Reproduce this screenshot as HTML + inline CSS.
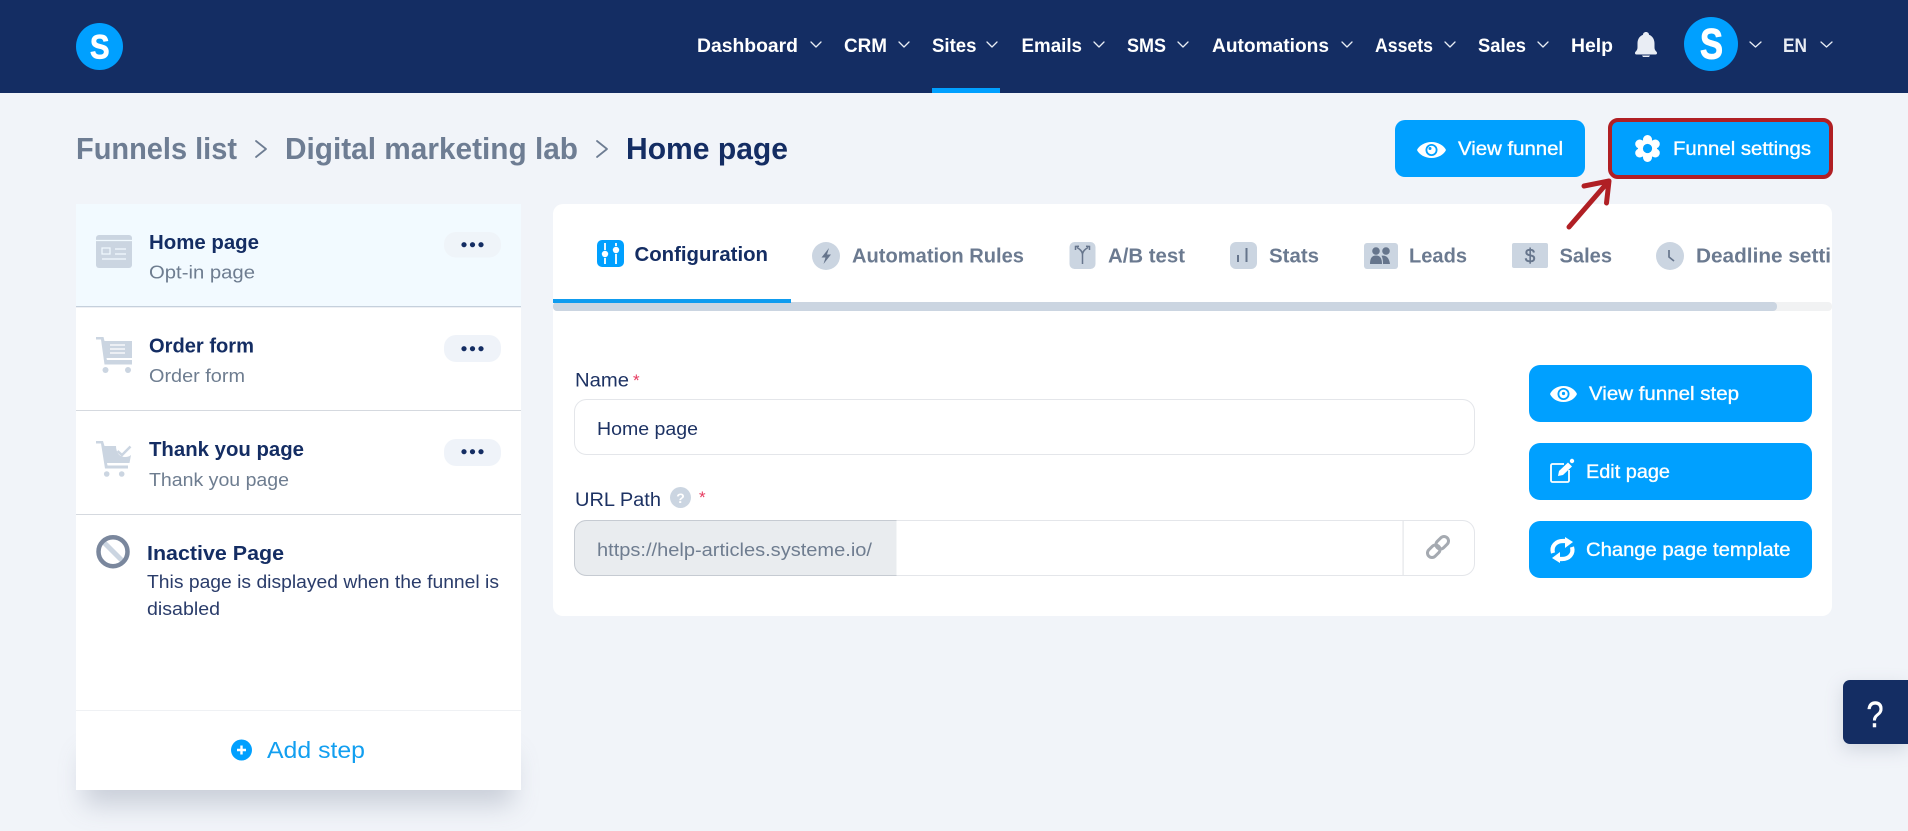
<!DOCTYPE html>
<html lang="en"><head><meta charset="utf-8"><title>Funnel step</title>
<style>
html,body{margin:0;padding:0;width:1908px;height:831px;overflow:hidden;background:#f1f4f9}
svg{display:block}
text{font-family:"Liberation Sans",sans-serif}
.nav{font-size:19px;font-weight:700;fill:#fff}
.ch{fill:none;stroke:#e8edf5;stroke-width:1.300;stroke-linecap:round;stroke-linejoin:round}
.bc{font-size:31px;font-weight:700;fill:#6e7d93}
.bcc{fill:none;stroke:#6e7d93;stroke-width:1.800;stroke-linecap:round;stroke-linejoin:round}
.rt{font-size:20px;font-weight:700;fill:#142d63}
.rs{font-size:18px;fill:#6e7d90}
.tab{font-size:20px;font-weight:700;fill:#6b7a90}
.lb{font-size:19px;fill:#1d3263}
.btn{font-size:19px;fill:#fff;stroke:#fff;stroke-width:.35}
.ic{fill:#cbd5e1}
.dot{fill:#142d63}
</style></head><body>
<svg xmlns="http://www.w3.org/2000/svg" width="1908" height="831" viewBox="0 0 1908 831">
<defs>
<filter id="sh" x="-20%" y="-80%" width="140%" height="260%"><feGaussianBlur stdDeviation="13"/></filter>
<filter id="sh2" x="-50%" y="-50%" width="200%" height="200%"><feGaussianBlur stdDeviation="9"/></filter>
<clipPath id="tabs"><rect x="553" y="204" width="1279" height="100"/></clipPath>
</defs>
<rect width="1908" height="831" fill="#f1f4f9"/>

<!-- header -->
<rect width="1908" height="93" fill="#142d63"/>
<circle cx="99.5" cy="46.5" r="23.5" fill="#00a0ff"/>
<text x="90" y="58.500" textLength="19.500" lengthAdjust="spacingAndGlyphs" font-weight="700" fill="#fff" stroke="#fff" stroke-width=".8" style="font-size:34px">S</text>

<text class="nav" x="697" y="52" textLength="101" lengthAdjust="spacingAndGlyphs">Dashboard</text>
<path class="ch" d="M811 42l5 5 5-5"/>
<text class="nav" x="844" y="52" textLength="43" lengthAdjust="spacingAndGlyphs">CRM</text>
<path class="ch" d="M899 42l5 5 5-5"/>
<text class="nav" x="932" y="52" textLength="44.500" lengthAdjust="spacingAndGlyphs">Sites</text>
<path class="ch" d="M987 42l5 5 5-5"/>
<rect x="932" y="88" width="68" height="5" fill="#00a0ff"/>
<text class="nav" x="1021.500" y="52" textLength="60.500" lengthAdjust="spacingAndGlyphs">Emails</text>
<path class="ch" d="M1094 42l5 5 5-5"/>
<text class="nav" x="1127" y="52" textLength="39" lengthAdjust="spacingAndGlyphs">SMS</text>
<path class="ch" d="M1178 42l5 5 5-5"/>
<text class="nav" x="1212" y="52" textLength="117" lengthAdjust="spacingAndGlyphs">Automations</text>
<path class="ch" d="M1342 42l5 5 5-5"/>
<text class="nav" x="1375" y="52" textLength="58" lengthAdjust="spacingAndGlyphs">Assets</text>
<path class="ch" d="M1445 42l5 5 5-5"/>
<text class="nav" x="1478" y="52" textLength="48" lengthAdjust="spacingAndGlyphs">Sales</text>
<path class="ch" d="M1538 42l5 5 5-5"/>
<text class="nav" x="1571" y="52" textLength="42" lengthAdjust="spacingAndGlyphs">Help</text>
<path d="M1646 32c-1.800 0-3 1.200-3 2.800-3.500 1.300-5.500 4.500-5.500 8.700v4c0 2-.8 3-2 4.200-1 1-.5 2.800 1 2.800h19c1.500 0 2-1.800 1-2.800-1.200-1.200-2-2.200-2-4.200v-4c0-4.200-2-7.400-5.500-8.700 0-1.600-1.200-2.800-3-2.800z" fill="#e9edf4"/>
<path d="M1642 55.500h8l-1 1.500h-6z" fill="#e9edf4"/>
<circle cx="1711" cy="44" r="27" fill="#00a0ff"/>
<text x="1700" y="58.500" textLength="23" lengthAdjust="spacingAndGlyphs" font-weight="700" fill="#fff" stroke="#fff" stroke-width="1" style="font-size:43px">S</text>
<path class="ch" d="M1750 42l5.500 5 5.500-5"/>
<text class="nav" x="1783" y="52" textLength="24" lengthAdjust="spacingAndGlyphs" style="fill:#e9edf4">EN</text>
<path class="ch" d="M1821 42l5.500 5 5.500-5"/>

<!-- breadcrumb -->
<text class="bc" x="76" y="159" textLength="161" lengthAdjust="spacingAndGlyphs">Funnels list</text>
<path class="bcc" d="M256 141l10 8-10 8"/>
<text class="bc" x="285" y="159" textLength="293" lengthAdjust="spacingAndGlyphs">Digital marketing lab</text>
<path class="bcc" d="M597 141l10 8-10 8"/>
<text class="bc" x="626" y="159" textLength="162" lengthAdjust="spacingAndGlyphs" style="fill:#142d63">Home page</text>

<!-- top buttons -->
<rect x="1395" y="120" width="190" height="57" rx="10" fill="#00a0ff"/>
<path d="M1417 150c2-4.500 8-8 14.500-8s12.500 3.500 14.500 8c-2 4.500-8 8-14.500 8s-12.500-3.500-14.500-8z" fill="#fff"/>
<circle cx="1431.500" cy="150" r="6" fill="#00a0ff"/><circle cx="1431.500" cy="150" r="4.200" fill="#fff"/><circle cx="1430" cy="148.500" r="1.500" fill="#00a0ff"/>
<text class="btn" x="1458" y="155" textLength="105" lengthAdjust="spacingAndGlyphs">View funnel</text>

<rect x="1610" y="120" width="221" height="57" rx="8" fill="#00a0ff" stroke="#b01f24" stroke-width="4"/>
<g fill="#fff">
<circle cx="1647.500" cy="148.500" r="9.500"/>
<circle cx="1647.500" cy="139.500" r="4.500"/><circle cx="1647.500" cy="157.500" r="4.500"/>
<circle cx="1639.700" cy="144" r="4.500"/><circle cx="1655.300" cy="144" r="4.500"/>
<circle cx="1639.700" cy="153" r="4.500"/><circle cx="1655.300" cy="153" r="4.500"/>
</g>
<circle cx="1647.500" cy="148.500" r="4.600" fill="#00a0ff"/>
<text class="btn" x="1673" y="155" textLength="138" lengthAdjust="spacingAndGlyphs">Funnel settings</text>

<!-- left panel -->
<rect x="84" y="755" width="429" height="50" fill="#8a93a5" opacity=".38" filter="url(#sh)"/>
<rect x="76" y="204" width="445" height="586" fill="#fff"/>
<rect x="76" y="204" width="445" height="103" fill="#f2faff"/>
<rect x="76" y="306" width="445" height="1.300" fill="#c5d0dc"/>
<rect x="76" y="410" width="445" height="1" fill="#d5d9df"/>
<rect x="76" y="514" width="445" height="1" fill="#d5d9df"/>
<rect x="76" y="710" width="445" height="1" fill="#eff1f4"/>

<!-- row icons -->
<rect x="96" y="235" width="36" height="33" rx="3" class="ic"/>
<g fill="none" stroke="#f2faff" stroke-width="1.200">
<path d="M96 240.500h36"/><rect x="102" y="248" width="8" height="6"/><path d="M115 249h11M115 254h11M102 259h24"/></g>

<path d="M96 337h7.500l1 4H132v17h-25.500l.4 2H132v4.500H104.500L101 339.500h-5z" class="ic"/>
<path d="M110 345h15M110 349h15M110 353h15" stroke="#fff" stroke-width="1.300"/>
<circle cx="105.500" cy="370" r="3" class="ic"/><circle cx="128" cy="370" r="3" class="ic"/>

<path d="M96 441h7l1.500 5H116c0 7 4 11 9 11 3 0 5-1 6-2l-1.500 8H107l.5 2.500H128v3H105L101 443.500h-5z" class="ic"/>
<path d="M117.500 451l4.500 4 8.500-8.500" fill="none" stroke="#cbd5e1" stroke-width="2.500"/>
<circle cx="106.700" cy="474" r="2.800" class="ic"/><circle cx="121.700" cy="474" r="2.800" class="ic"/>

<g>
<rect x="444" y="232" width="57" height="25.500" rx="12" fill="#eff4f9"/>
<rect x="444" y="335" width="57" height="27" rx="12" fill="#eff3f9"/>
<rect x="444" y="439" width="57" height="27" rx="12" fill="#eff3f9"/>
<circle class="dot" cx="464" cy="244.700" r="2.600"/><circle class="dot" cx="472.500" cy="244.700" r="2.600"/><circle class="dot" cx="481" cy="244.700" r="2.600"/>
<circle class="dot" cx="464" cy="348.700" r="2.600"/><circle class="dot" cx="472.500" cy="348.700" r="2.600"/><circle class="dot" cx="481" cy="348.700" r="2.600"/>
<circle class="dot" cx="464" cy="451.700" r="2.600"/><circle class="dot" cx="472.500" cy="451.700" r="2.600"/><circle class="dot" cx="481" cy="451.700" r="2.600"/>
</g>

<text class="rt" x="149" y="249" textLength="110" lengthAdjust="spacingAndGlyphs">Home page</text>
<text class="rs" x="149" y="278.500" textLength="106" lengthAdjust="spacingAndGlyphs">Opt-in page</text>
<text class="rt" x="149" y="352.700" textLength="105" lengthAdjust="spacingAndGlyphs">Order form</text>
<text class="rs" x="149" y="382" textLength="96" lengthAdjust="spacingAndGlyphs">Order form</text>
<text class="rt" x="149" y="456" textLength="155" lengthAdjust="spacingAndGlyphs">Thank you page</text>
<text class="rs" x="149" y="486" textLength="140" lengthAdjust="spacingAndGlyphs">Thank you page</text>

<!-- inactive -->
<path d="M102.500 541l21 21" stroke="#cbd5e1" stroke-width="5"/>
<circle cx="113" cy="551.700" r="14.500" fill="none" stroke="#7a879d" stroke-width="4.500"/>
<text x="147" y="560" textLength="137" lengthAdjust="spacingAndGlyphs" font-weight="700" fill="#142d63" style="font-size:20px">Inactive Page</text>
<text x="147" y="588" textLength="352" lengthAdjust="spacingAndGlyphs" fill="#2a3c6a" style="font-size:18px">This page is displayed when the funnel is</text>
<text x="147" y="615" textLength="73" lengthAdjust="spacingAndGlyphs" fill="#2a3c6a" style="font-size:18px">disabled</text>

<!-- add step -->
<circle cx="241.500" cy="750" r="10.500" fill="#00a0ff"/>
<path d="M241.500 745.500v9M237 750h9" stroke="#fff" stroke-width="2.400"/>
<text x="267" y="758" textLength="98" lengthAdjust="spacingAndGlyphs" fill="#129ff0" style="font-size:23px">Add step</text>

<!-- right panel -->
<rect x="553" y="204" width="1279" height="412" rx="10" fill="#fff"/>
<rect x="553" y="302" width="1279" height="9" rx="4" fill="#f1f2f3"/>
<rect x="553" y="302" width="1224" height="9" rx="4" fill="#cbd5e1"/>
<rect x="553" y="299" width="238" height="4" fill="#0f9cef"/>

<g clip-path="url(#tabs)">
<rect x="597" y="240" width="27" height="27" rx="5" fill="#00a0ff"/>
<path d="M605 243v7M605 258v6M616 243v3M616 254v10" stroke="#fff" stroke-width="1.800"/>
<circle cx="605" cy="254" r="3.200" fill="#fff"/><circle cx="616" cy="250" r="3.200" fill="#fff"/>
<text x="634.500" y="261" textLength="133.500" lengthAdjust="spacingAndGlyphs" font-weight="700" fill="#142d63" style="font-size:20px">Configuration</text>

<circle cx="826" cy="256" r="14" class="ic"/>
<path d="M829 248l-7.500 9.500h4l-2 6.500 7.500-9.500h-4z" fill="#66758c"/>
<text class="tab" x="852" y="262.700" textLength="172" lengthAdjust="spacingAndGlyphs">Automation Rules</text>

<rect x="1069.500" y="242" width="26" height="27" rx="5" class="ic"/>
<path d="M1082.500 264v-9M1082.500 255c0-4-3-6-5.500-7.500M1082.500 255c0-4 3-6 5.500-7.500M1075.500 250l0-3.500 3.500-.3M1089.500 250l0-3.500-3.500-.3" fill="none" stroke="#66758c" stroke-width="1.500"/>
<text class="tab" x="1108" y="262.700" textLength="77" lengthAdjust="spacingAndGlyphs">A/B test</text>

<rect x="1230" y="242" width="27" height="27" rx="6" class="ic"/>
<path d="M1238 255v7M1246.500 248v14" stroke="#66758c" stroke-width="2"/>
<text class="tab" x="1269" y="262.700" textLength="50" lengthAdjust="spacingAndGlyphs">Stats</text>

<rect x="1364" y="243" width="34" height="26" rx="3" class="ic"/>
<circle cx="1376" cy="251" r="3.800" fill="#66758c"/><circle cx="1386" cy="251" r="3.800" fill="#66758c"/>
<path d="M1370 264c0-6 2-8.500 6-8.500s6 2.500 6 8.500zM1381.500 255.800c4-.8 7.500 1 8.500 8.200h-7c0-3-.3-6-1.500-8.200z" fill="#66758c"/>
<text class="tab" x="1409" y="262.700" textLength="58" lengthAdjust="spacingAndGlyphs">Leads</text>

<rect x="1512" y="243" width="36" height="25" rx="2" class="ic"/>
<text x="1530" y="262.500" text-anchor="middle" fill="#66758c" stroke="#66758c" stroke-width=".4" style="font-size:19px">$</text>
<text class="tab" x="1559.500" y="262.700" textLength="52.500" lengthAdjust="spacingAndGlyphs">Sales</text>

<circle cx="1670" cy="256" r="14" class="ic"/>
<path d="M1669 250v7l5 4" fill="none" stroke="#66758c" stroke-width="1.700"/>
<text class="tab" x="1696" y="262.700" textLength="172" lengthAdjust="spacingAndGlyphs">Deadline settings</text>
</g>

<!-- form -->
<text class="lb" x="575" y="386.500" textLength="54" lengthAdjust="spacingAndGlyphs">Name</text>
<text x="633" y="386" fill="#e63a5f" style="font-size:17px">*</text>
<rect x="574.500" y="399.500" width="900" height="55" rx="12" fill="#fff" stroke="#e4e6ea"/>
<text class="lb" x="597" y="435" textLength="101" lengthAdjust="spacingAndGlyphs" style="font-size:18px">Home page</text>

<text class="lb" x="575" y="506" textLength="86" lengthAdjust="spacingAndGlyphs">URL Path</text>
<circle cx="680.500" cy="497.500" r="10.500" class="ic"/>
<text x="680.500" y="503" text-anchor="middle" font-weight="700" fill="#fff" style="font-size:14px">?</text>
<text x="699" y="503" fill="#e63a5f" style="font-size:17px">*</text>

<rect x="574.500" y="520.500" width="900" height="55" rx="12" fill="#fff" stroke="#e4e6ea"/>
<path d="M896 520.500H586.500a12 12 0 0 0-12 12v31a12 12 0 0 0 12 12H896z" fill="#e9ecef" stroke="#c6cbd2"/>
<path d="M896 521v54" stroke="#e9ecef" stroke-width="1"/>
<text x="597" y="556" textLength="275" lengthAdjust="spacingAndGlyphs" fill="#6f7d90" style="font-size:18px">https://help-articles.systeme.io/</text>
<rect x="1402.500" y="521" width="1.200" height="54" fill="#e4e6ea"/>
<g fill="none" stroke="#a5aab1" stroke-width="3" stroke-linecap="round" transform="rotate(-45 1438 547)">
<rect x="1425" y="542.500" width="14" height="9" rx="4.500"/><rect x="1437" y="542.500" width="14" height="9" rx="4.500"/></g>

<!-- right buttons -->
<rect x="1529" y="365" width="283" height="57" rx="11" fill="#00a0ff"/>
<path d="M1550 394c2-4.500 7-8 13.500-8s11.500 3.500 13.500 8c-2 4.500-7 8-13.500 8s-11.500-3.500-13.500-8z" fill="#fff"/>
<circle cx="1563.500" cy="394" r="6" fill="#00a0ff"/><circle cx="1563.500" cy="394" r="4.200" fill="#fff"/><circle cx="1563.500" cy="393.500" r="1.600" fill="#00a0ff"/>
<text class="btn" x="1589" y="400" textLength="150" lengthAdjust="spacingAndGlyphs">View funnel step</text>

<rect x="1529" y="443" width="283" height="57" rx="11" fill="#00a0ff"/>
<path d="M1564 464h-11.500a1.500 1.500 0 0 0-1.500 1.500v15a1.500 1.500 0 0 0 1.500 1.500h15a1.500 1.500 0 0 0 1.500-1.500V470" fill="none" stroke="#fff" stroke-width="1.800"/>
<path d="M1558 476l1-5 9-8.500 4 4-9 8.500z" fill="#fff"/>
<circle cx="1572" cy="461" r="2.200" fill="#fff"/>
<text class="btn" x="1586" y="478" textLength="84" lengthAdjust="spacingAndGlyphs">Edit page</text>

<rect x="1529" y="521" width="283" height="57" rx="11" fill="#00a0ff"/>
<path d="M1553 553c-2-7 3-12 10-12h4" fill="none" stroke="#fff" stroke-width="4.200"/>
<path d="M1565 537l8 5-8 6z" fill="#fff"/>
<path d="M1572 547c2 7-3 12-10 12h-4" fill="none" stroke="#fff" stroke-width="4.200"/>
<path d="M1560 563l-8-5 8-6z" fill="#fff"/>
<text class="btn" x="1586" y="556" textLength="204.500" lengthAdjust="spacingAndGlyphs">Change page template</text>

<!-- arrow -->
<path d="M1569 227l39-45M1584 186l25-5-2.500 22" fill="none" stroke="#b01f24" stroke-width="5" stroke-linecap="round" stroke-linejoin="round"/>

<!-- help widget -->
<rect x="1843" y="686" width="65" height="64" fill="#8a93a5" opacity=".3" filter="url(#sh2)"/>
<path d="M1908 680h-58a7 7 0 0 0-7 7v50a7 7 0 0 0 7 7h58z" fill="#142d63"/>
<text x="1866.500" y="727" textLength="17" lengthAdjust="spacingAndGlyphs" fill="#fff" stroke="#fff" stroke-width=".5" style="font-size:36px">?</text>
</svg>
</body></html>
